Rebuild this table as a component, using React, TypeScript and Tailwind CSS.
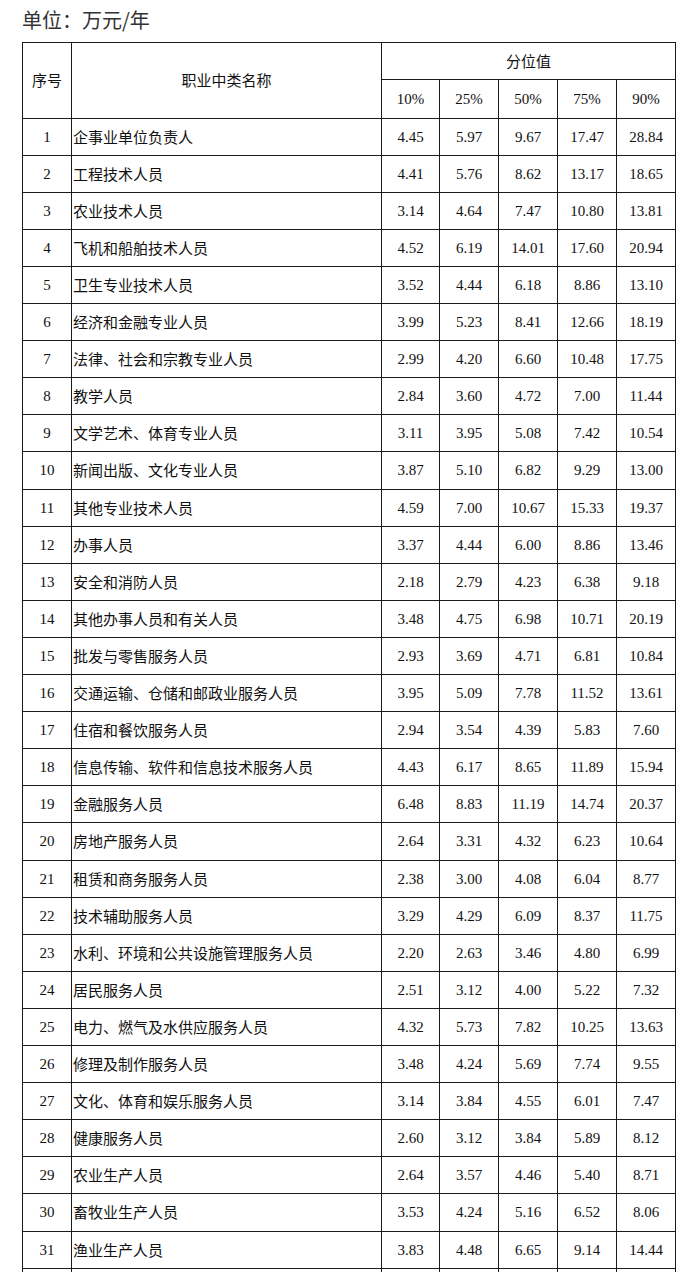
import React from 'react';

const rows: [string, string[]][] = [
  ['企事业单位负责人', ['4.45', '5.97', '9.67', '17.47', '28.84']],
  ['工程技术人员', ['4.41', '5.76', '8.62', '13.17', '18.65']],
  ['农业技术人员', ['3.14', '4.64', '7.47', '10.80', '13.81']],
  ['飞机和船舶技术人员', ['4.52', '6.19', '14.01', '17.60', '20.94']],
  ['卫生专业技术人员', ['3.52', '4.44', '6.18', '8.86', '13.10']],
  ['经济和金融专业人员', ['3.99', '5.23', '8.41', '12.66', '18.19']],
  ['法律、社会和宗教专业人员', ['2.99', '4.20', '6.60', '10.48', '17.75']],
  ['教学人员', ['2.84', '3.60', '4.72', '7.00', '11.44']],
  ['文学艺术、体育专业人员', ['3.11', '3.95', '5.08', '7.42', '10.54']],
  ['新闻出版、文化专业人员', ['3.87', '5.10', '6.82', '9.29', '13.00']],
  ['其他专业技术人员', ['4.59', '7.00', '10.67', '15.33', '19.37']],
  ['办事人员', ['3.37', '4.44', '6.00', '8.86', '13.46']],
  ['安全和消防人员', ['2.18', '2.79', '4.23', '6.38', '9.18']],
  ['其他办事人员和有关人员', ['3.48', '4.75', '6.98', '10.71', '20.19']],
  ['批发与零售服务人员', ['2.93', '3.69', '4.71', '6.81', '10.84']],
  ['交通运输、仓储和邮政业服务人员', ['3.95', '5.09', '7.78', '11.52', '13.61']],
  ['住宿和餐饮服务人员', ['2.94', '3.54', '4.39', '5.83', '7.60']],
  ['信息传输、软件和信息技术服务人员', ['4.43', '6.17', '8.65', '11.89', '15.94']],
  ['金融服务人员', ['6.48', '8.83', '11.19', '14.74', '20.37']],
  ['房地产服务人员', ['2.64', '3.31', '4.32', '6.23', '10.64']],
  ['租赁和商务服务人员', ['2.38', '3.00', '4.08', '6.04', '8.77']],
  ['技术辅助服务人员', ['3.29', '4.29', '6.09', '8.37', '11.75']],
  ['水利、环境和公共设施管理服务人员', ['2.20', '2.63', '3.46', '4.80', '6.99']],
  ['居民服务人员', ['2.51', '3.12', '4.00', '5.22', '7.32']],
  ['电力、燃气及水供应服务人员', ['4.32', '5.73', '7.82', '10.25', '13.63']],
  ['修理及制作服务人员', ['3.48', '4.24', '5.69', '7.74', '9.55']],
  ['文化、体育和娱乐服务人员', ['3.14', '3.84', '4.55', '6.01', '7.47']],
  ['健康服务人员', ['2.60', '3.12', '3.84', '5.89', '8.12']],
  ['农业生产人员', ['2.64', '3.57', '4.46', '5.40', '8.71']],
  ['畜牧业生产人员', ['3.53', '4.24', '5.16', '6.52', '8.06']],
  ['渔业生产人员', ['3.83', '4.48', '6.65', '9.14', '14.44']],
];

const cjk = "font-['Noto_Sans_CJK_SC',sans-serif]";
const serif = "font-['Liberation_Serif','Noto_Sans_CJK_SC',serif]";
const cell = 'border border-[#1a1a1a] p-0';
const pct = ['10%', '25%', '50%', '75%', '90%'];

export default function App() {
  return (
    <div className="w-[700px] h-[1272px] overflow-hidden bg-white text-[#111]">
      <div className={`${cjk} pl-[22px] pt-[5px] h-[42px] text-[20px] leading-[30px] text-[#333]`}>
        单位：万元/年
      </div>
      <table className="ml-[22px] w-[653px] border-collapse table-fixed">
        <colgroup>
          <col className="w-[49px]" />
          <col className="w-[310px]" />
          <col className="w-[58px]" />
          <col className="w-[59px]" />
          <col className="w-[59px]" />
          <col className="w-[59px]" />
          <col className="w-[59px]" />
        </colgroup>
        <thead>
          <tr className="h-[37px]">
            <th rowSpan={2} className={`${cell} ${cjk} font-normal text-[15px] text-center`}>序号</th>
            <th rowSpan={2} className={`${cell} ${cjk} font-normal text-[15px] text-center`}>职业中类名称</th>
            <th colSpan={5} className={`${cell} ${cjk} font-normal text-[15px] text-center`}>分位值</th>
          </tr>
          <tr className="h-[39px]">
            {pct.map((p) => (
              <th key={p} className={`${cell} ${serif} font-normal text-[15px] text-center`}>{p}</th>
            ))}
          </tr>
        </thead>
        <tbody>
          {rows.map(([name, vals], i) => (
            <tr key={name} className={i % 10 === 9 ? 'h-[38px]' : 'h-[37px]'}>
              <td className={`${cell} ${serif} text-[15px] text-center`}>{i + 1}</td>
              <td className={`${cell} ${cjk} text-[15px] pl-[1px] whitespace-nowrap`}>{name}</td>
              {vals.map((v, j) => (
                <td key={j} className={`${cell} ${serif} text-[15px] text-center`}>{v}</td>
              ))}
            </tr>
          ))}
          <tr className="h-[37px]">
            {Array.from({ length: 7 }).map((_, j) => (
              <td key={j} className={cell} />
            ))}
          </tr>
        </tbody>
      </table>
    </div>
  );
}
